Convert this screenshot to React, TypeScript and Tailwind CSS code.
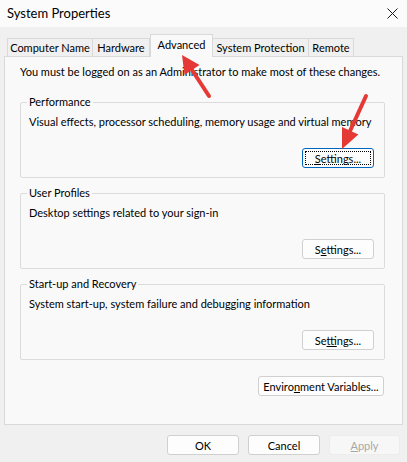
import React from "react";

function Btn({
  children,
  w,
  focused,
  disabled,
}: {
  children: React.ReactNode;
  w: string;
  focused?: boolean;
  disabled?: boolean;
}) {
  if (focused) {
    return (
      <div className={`${w} h-[20px] rounded-[3px] border border-[#0067c0] bg-[#fdfdfd] p-[2px] flex`}>
        <div className="flex-1 border border-dotted border-black flex items-center justify-center leading-none whitespace-nowrap">
          {children}
        </div>
      </div>
    );
  }
  return (
    <div
      className={`${w} h-[20px] rounded-[3px] border ${
        disabled ? "border-[#ececec] bg-[#f7f7f7] text-[#a8a8a8]" : "border-[#d0d0d0] bg-[#fdfdfd] text-black"
      } flex items-center justify-center leading-none whitespace-nowrap`}
    >
      {children}
    </div>
  );
}

function Group({
  title,
  desc,
  btn,
  mt,
}: {
  title: string;
  desc: string;
  btn: React.ReactNode;
  mt: string;
}) {
  return (
    <fieldset className={`${mt} border border-[#dcdcdc] rounded-[2px] px-0 pb-[9px] m-0 min-w-0`}>
      <legend className="ml-[6px] px-[2px] leading-[16px] whitespace-nowrap">{title}</legend>
      <div className="pl-[8px] mt-[4px] leading-[16px] whitespace-nowrap">{desc}</div>
      <div className="flex justify-end pr-[10px] mt-[18px]">{btn}</div>
    </fieldset>
  );
}

export default function App() {
  const tabs = [
    { t: "Computer Name", w: "w-[86px]" },
    { t: "Hardware", w: "w-[57px]" },
    { t: "Advanced", w: "w-[63px]", sel: true },
    { t: "System Protection", w: "w-[96px]" },
    { t: "Remote", w: "w-[45px]" },
  ];
  return (
    <div className="relative w-[407px] h-[462px] overflow-hidden bg-[#f0f0f0] text-[11px] text-black font-['Lato',sans-serif]">
      {/* Title bar */}
      <div className="h-[27px] bg-[#fbfbfb] flex items-center justify-between pl-[7px] pr-[9px]">
        <span className="leading-none whitespace-nowrap text-[13px]">System Properties</span>
        <svg width="11" height="11" viewBox="0 0 11 11">
          <path d="M0.5 0.5 L10.5 10.5 M10.5 0.5 L0.5 10.5" stroke="#1a1a1a" strokeWidth="1" />
        </svg>
      </div>
      {/* Tabs */}
      <div className="h-[29px] flex items-end pl-[7px] relative z-10">
        {tabs.map((tb) =>
          tb.sel ? (
            <div
              key={tb.t}
              className={`${tb.w} h-[23px] -mb-px border border-b-0 border-[#d9d9d9] bg-[#f9f9f9] flex items-start justify-center pt-[2px] leading-[16px] whitespace-nowrap`}
            >
              {tb.t}
            </div>
          ) : (
            <div
              key={tb.t}
              className={`${tb.w} h-[18px] border border-b-0 border-l-0 first:border-l border-[#d9d9d9] bg-[#f0f0f0] flex items-center justify-center leading-[16px] whitespace-nowrap`}
            >
              {tb.t}
            </div>
          )
        )}
      </div>
      {/* Panel */}
      <div className="mx-[4px] h-[369px] border border-[#d9d9d9] bg-[#f9f9f9] pl-[15px] pr-[17px] pt-[7px]">
        <div className="leading-[16px] whitespace-nowrap">
          You must be logged on as an Administrator to make most of these changes.
        </div>
        <Group
          mt="mt-[14px]"
          title="Performance"
          desc="Visual effects, processor scheduling, memory usage and virtual memory"
          btn={
            <Btn w="w-[72px]" focused>
              <span>
                <u>S</u>ettings...
              </span>
            </Btn>
          }
        />
        <Group
          mt="mt-[7px]"
          title="User Profiles"
          desc="Desktop settings related to your sign-in"
          btn={
            <Btn w="w-[72px]">
              <span>
                S<u>e</u>ttings...
              </span>
            </Btn>
          }
        />
        <Group
          mt="mt-[7px]"
          title="Start-up and Recovery"
          desc="System start-up, system failure and debugging information"
          btn={
            <Btn w="w-[72px]">
              <span>
                Se<u>t</u>tings...
              </span>
            </Btn>
          }
        />
        <div className="flex justify-end mt-[16px] pr-px">
          <Btn w="w-[126px]">
            <span>
              Enviro<u>n</u>ment Variables...
            </span>
          </Btn>
        </div>
      </div>
      {/* Bottom buttons */}
      <div className="flex justify-end gap-[9px] pr-[7px] mt-[10px]">
        <Btn w="w-[72px]">OK</Btn>
        <Btn w="w-[72px]">Cancel</Btn>
        <Btn w="w-[71px]" disabled>
          <span>
            <u>A</u>pply
          </span>
        </Btn>
      </div>
      {/* Annotation arrows */}
      <svg className="absolute inset-0 pointer-events-none z-20" width="407" height="462" viewBox="0 0 407 462">
        <line x1="209" y1="96" x2="192" y2="70" stroke="#e53935" strokeWidth="4" strokeLinecap="round" />
        <polygon points="182,55 199.5,65 184.5,75" fill="#e53935" />
        <line x1="366" y1="96" x2="350" y2="131" stroke="#e53935" strokeWidth="4" strokeLinecap="round" />
        <polygon points="342,149 358.4,134.5 342,127" fill="#e53935" />
      </svg>
    </div>
  );
}
